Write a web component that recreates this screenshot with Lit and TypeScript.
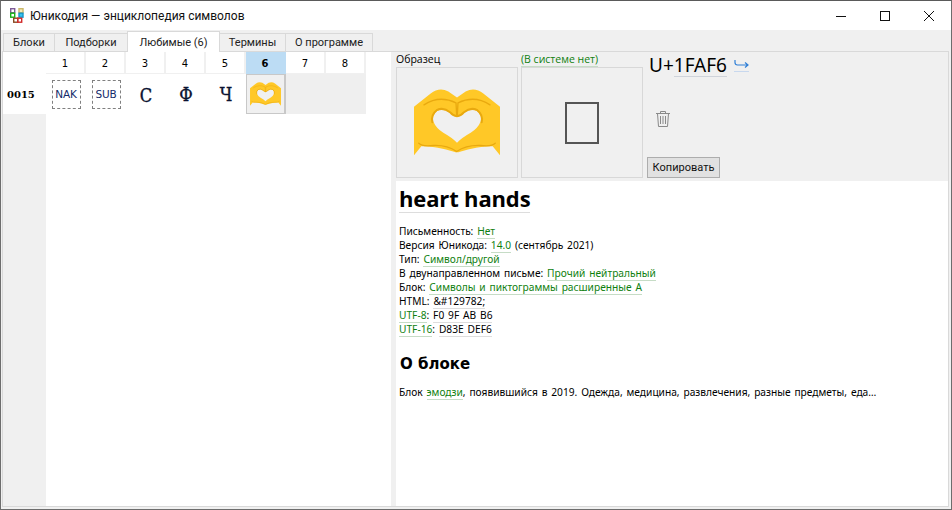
import { LitElement, html, css, svg } from "lit";
import { customElement } from "lit/decorators.js";

const heart = (w: number, h: number) => html`<svg class="heart" width=${w} height=${h} viewBox="42 55 258 200">
  <path fill="#ffc827" fill-rule="evenodd" d="M42 108 L92 68 Q118 48 145 62 L171 80 L197 62 Q224 48 250 68 L300 108 V253 L278 226 Q228 226 180 243 Q171 246 162 243 Q114 226 64 226 L42 253 Z M171 138 Q160 138 150 126 Q132 112 112 120 Q96 132 100 152 Q108 172 130 186 Q158 202 171 216 Q184 202 212 186 Q234 172 242 152 Q246 132 230 120 Q210 112 192 126 Q182 138 171 138 Z"/>
  ${svg`<g fill="none" stroke="#e9a90f" stroke-width="6" stroke-linecap="round">
    <path d="M171 136 Q160 136 150 124 Q130 108 110 118 Q92 132 97 154 M171 136 Q182 136 192 124 Q212 108 232 118 Q250 132 245 154"/>
    <path stroke-width="4" d="M72 102 Q118 72 168 96 L170 132 M270 102 Q224 72 174 96 L172 132"/>
    <path stroke-width="4" d="M56 217 Q66 228 100 224 Q140 222 170 242 Q200 222 242 224 Q276 228 286 217"/>
  </g>`}
</svg>`;

@customElement("app-root")
export class AppRoot extends LitElement {
  static styles = css`
    :host { display: block; width: 952px; height: 510px; font-family: "Open Sans", "Noto Sans", sans-serif; font-size: 12px; color: #000; }
    .win { box-sizing: border-box; width: 952px; height: 510px; display: flex; flex-direction: column; background: #f0f0f0; border: 1px solid #6d6d6d; border-top-color: #5a5a5a; }
    .title { flex: none; height: 29px; background: #fff; display: flex; align-items: center; font: 12px "Roboto", sans-serif; }
    .logo { margin: 0 5px 0 8px; flex: none; }
    .title .name { flex: 1; color: #111; }
    .wbtn { width: 44px; height: 29px; display: flex; align-items: center; justify-content: center; }
    .tabs { flex: none; height: 21px; display: flex; align-items: flex-end; padding-left: 3px; position: relative; z-index: 1; }
    .tab { box-sizing: border-box; height: 18px; border: 1px solid #d9d9d9; border-bottom: none; margin-left: -1px; display: flex; align-items: center; justify-content: center; background: #f0f0f0; font: 11px "Roboto", sans-serif; color: #222; }
    .tab.on { height: 21px; background: #fff; margin-bottom: -1px; position: relative; }
    .panel { flex: 1; min-height: 0; display: flex; margin: 0 2px 2px 1px; border: 1px solid #d9d9d9; background: #fff; }
    .left { width: 388px; flex: none; display: grid; grid-template-columns: 43px repeat(8, 40px); grid-template-rows: 22px 40px 1fr; background: #fff; }
    .corner { background: #fff; }
    .hd { display: flex; align-items: center; justify-content: center; padding-top: 1px; border-right: 2px solid #f0f0f0; border-bottom: 1px solid #f0f0f0; box-sizing: border-box; font-family: "DejaVu Sans", sans-serif; font-size: 10px; }
    .hd.sel { background: #bcdcf4; font-weight: 700; border-color: #bcdcf4; }
    .rowh { display: flex; align-items: center; padding-left: 4px; font: 700 10px "DejaVu Serif", serif; }
    .cell { display: flex; align-items: center; justify-content: center; background: #fff; font: 400 18px "DejaVu Serif Condensed", "DejaVu Serif", serif; color: #0a1230; -webkit-text-stroke: .35px #0a1230; }
    .cell.low { padding-top: 3px; box-sizing: border-box; }
    .cell.empty { background: #efefef; }
    .cell.sel { box-sizing: border-box; background: #f0f0f0; border: 1px solid #c8c8c8; border-width: 1px 2px 1px 1px; }
    .ctl { box-sizing: border-box; width: 29px; height: 29px; border: 1px dashed #808080; display: flex; align-items: center; justify-content: center; font: 400 10.5px "DejaVu Sans", sans-serif; color: #122a6a; letter-spacing: -.2px; -webkit-text-stroke: 0; }
    .gutter { background: #f0f0f0; }
    .rest { grid-column: 2 / -1; background: #fff; }
    .right { flex: 1; min-width: 0; display: flex; flex-direction: column; border-left: 5px solid #f0f0f0; }
    .top { flex: none; height: 129px; background: #f0f0f0; display: flex; box-sizing: border-box; }
    .col { width: 122px; margin-right: 3px; display: flex; flex-direction: column; }
    .lbl { height: 13px; line-height: 14px; font-size: 10.5px; white-space: nowrap; }
    .lbl span { color: #0f7f0f; border-bottom: 1px solid #c6dcc6; }
    .box { box-sizing: border-box; margin-top: 2px; height: 111px; border: 1px solid #d8d8d8; display: flex; align-items: center; justify-content: center; }
    .miss { box-sizing: border-box; width: 34px; height: 42px; border: 2px solid #555; }
    .side { flex: 1; display: flex; flex-direction: column; align-items: flex-start; padding-left: 1px; }
    .code { display: flex; align-items: center; font-size: 19px; height: 26px; margin-left: 2px; color: #000; font-family: "Noto Sans", sans-serif; white-space: nowrap; }
    .code b { font-weight: 400; border-bottom: 1px solid #cfd3da; line-height: 22px; }
    .arrow { margin-left: 7px; border-bottom: 1px solid #c8d8ee; display: flex; padding-bottom: 3px; margin-top: 1px; }
    .trash { margin: 32px 0 0 8px; display: block; }
    .btn { box-sizing: border-box; width: 73px; height: 21px; margin-top: 30px; background: #e1e1e1; border: 1px solid #adadad; font: 11px "Roboto", sans-serif; padding: 0; color: #111; display: flex; align-items: center; justify-content: center; }
    .info { flex: 1; background: #fff; padding: 3px 0 0 3px; font-family: "Noto Sans", sans-serif; font-size: 10.2px; word-spacing: 1.2px; line-height: 14px; }
    h1 { display: inline-block; margin: 0; font: 700 22px/28px "Open Sans", sans-serif; border-bottom: 1px solid #ddd; letter-spacing: -.15px; word-spacing: 0; }
    .lines { margin-top: 11px; white-space: nowrap; }
    .u { border-bottom: 1px solid #ddd; }
    .g { color: #0f7f0f; border-bottom: 1px solid #c6dcc6; }
    h2 { margin: 18px 0 0 1px; font: 700 15px/20px "DejaVu Sans", sans-serif; word-spacing: 0; }
    p { margin: 11px 0 0; white-space: nowrap; }
  `;

  render() {
    const tabs: [string, number, boolean][] = [["Блоки", 52, false], ["Подборки", 74, false], ["Любимые (6)", 93, true], ["Термины", 67, false], ["О программе", 88, false]];
    return html`<div class="win">
      <div class="title">
        <svg class="logo" width="16" height="16" viewBox="0 0 16 16" fill="none" stroke-width="1.4">
          <rect x="1.7" y="0.7" width="4" height="4" stroke="#7d5a96"/><rect x="10" y="0.7" width="4" height="4" stroke="#cbb869" fill="#f4e9b8"/>
          <rect x="1.7" y="5.2" width="4" height="4" stroke="#17b317"/><rect x="10" y="5.2" width="4" height="4" stroke="#1797c9" fill="#37c1ee"/>
          <rect x="4.7" y="10.2" width="4" height="4" stroke="#8a4a22"/><rect x="8.7" y="10.2" width="4" height="4" stroke="#d12a2a"/>
        </svg>
        <div class="name">Юникодия — энциклопедия символов</div>
        <div class="wbtn"><svg width="10" height="10"><path d="M0 5.5H10" stroke="#111"/></svg></div>
        <div class="wbtn"><svg width="10" height="10"><rect x=".5" y=".5" width="9" height="9" fill="none" stroke="#111"/></svg></div>
        <div class="wbtn"><svg width="10" height="10"><path d="M0 0L10 10M10 0L0 10" stroke="#111"/></svg></div>
      </div>
      <div class="tabs">
        ${tabs.map(([t, w, on]) => html`<div class="tab ${on ? "on" : ""}" style="width:${w}px">${t}</div>`)}
      </div>
      <div class="panel">
        <div class="left">
          <div class="corner"></div>
          ${[1, 2, 3, 4, 5, 6, 7, 8].map((n) => html`<div class="hd ${n === 6 ? "sel" : ""}">${n}</div>`)}
          <div class="rowh">0015</div>
          <div class="cell"><div class="ctl">NAK</div></div>
          <div class="cell"><div class="ctl">SUB</div></div>
          <div class="cell low">C</div>
          <div class="cell">Ф</div>
          <div class="cell">Ч</div>
          <div class="cell sel">${heart(31, 24)}</div>
          <div class="cell empty"></div>
          <div class="cell empty"></div>
          <div class="gutter"></div>
          <div class="rest"></div>
        </div>
        <div class="right">
          <div class="top">
            <div class="col">
              <div class="lbl">Образец</div>
              <div class="box">${heart(86, 67)}</div>
            </div>
            <div class="col">
              <div class="lbl"><span>(В системе нет)</span></div>
              <div class="box"><div class="miss"></div></div>
            </div>
            <div class="side">
              <div class="code">U+<b>1FAF6</b>
                <span class="arrow"><svg width="15" height="8" viewBox="0 0 15 8" fill="none" stroke="#2f7fd6" stroke-width="1.2"><path d="M1 0V2.5Q1 5 3.5 5H14M11 2.5L14 5L11 7.5"/></svg></span>
              </div>
              <svg class="trash" width="16" height="17" viewBox="0 0 16 17" fill="none" stroke="#8a8a8a"><path d="M1 3.5H15M5.5 3V1.5H10.5V3M2.5 3.5L3.5 16.5H12.5L13.5 3.5M5.5 6V14M8 6V14M10.5 6V14"/></svg>
              <div class="btn">Копировать</div>
            </div>
          </div>
          <div class="info">
            <h1>heart hands</h1>
            <div class="lines">
              <div>Письменность: <span class="g">Нет</span></div>
              <div>Версия Юникода: <span class="g">14.0</span> (сентябрь 2021)</div>
              <div>Тип: <span class="g">Символ/другой</span></div>
              <div>В двунаправленном письме: <span class="g">Прочий нейтральный</span></div>
              <div>Блок: <span class="g">Символы и пиктограммы расширенные А</span></div>
              <div>HTML: <span class="u">&amp;#129782;</span></div>
              <div><span class="g">UTF-8</span>: <span class="u">F0 9F AB B6</span></div>
              <div><span class="g">UTF-16</span>: <span class="u">D83E DEF6</span></div>
            </div>
            <h2>О блоке</h2>
            <p>Блок <span class="g">эмодзи</span>, появившийся в 2019. Одежда, медицина, развлечения, разные предметы, еда…</p>
          </div>
        </div>
      </div>
    </div>`;
  }
}
